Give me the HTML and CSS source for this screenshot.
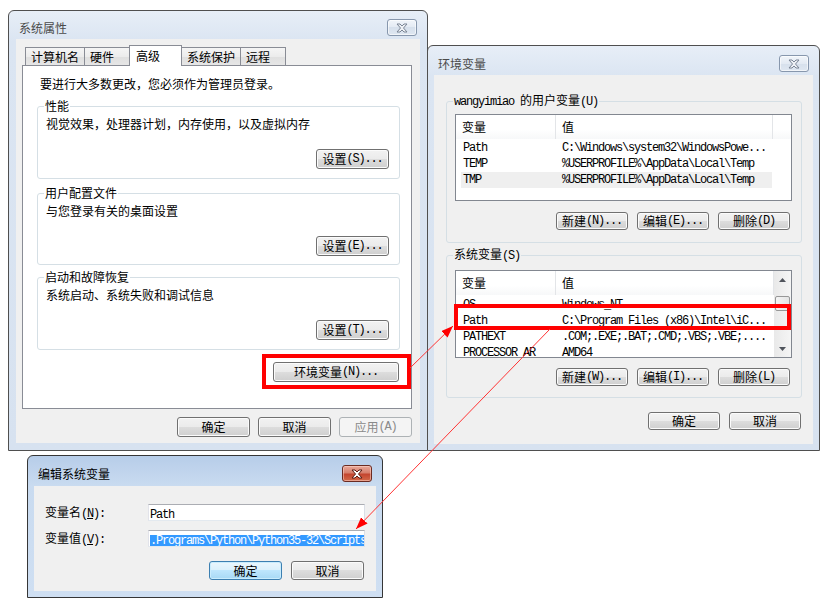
FILE: index.html
```html
<!DOCTYPE html>
<html lang="zh-CN">
<head>
<meta charset="utf-8">
<title>环境变量</title>
<link rel="stylesheet" href="styles.css">
</head>
<body>

<section class="win w1">
  <header class="tb">
    <span class="ttl">系统属性</span>
    <span class="cls"><svg width="12" height="10" viewBox="0 0 12 10"><path d="M1 1h3l2 2 2-2h3l-3.5 4 3.5 4h-3l-2-2-2 2h-3l3.5-4z" class="xg"/></svg></span>
  </header>
  <div class="client c1">
    <div class="tabs">
      <div class="tab">计算机名</div>
      <div class="tab">硬件</div>
      <div class="tab sel">高级</div>
      <div class="tab">系统保护</div>
      <div class="tab">远程</div>
    </div>
    <div class="panel">
      <p class="intro">要进行大多数更改，您必须作为管理员登录。</p>
      <fieldset class="grp g1">
        <legend>性能</legend>
        <p>视觉效果，处理器计划，内存使用，以及虚拟内存</p>
        <div class="brow"><button class="btn">设置<span class="m">(S)...</span></button></div>
      </fieldset>
      <fieldset class="grp g2">
        <legend>用户配置文件</legend>
        <p>与您登录有关的桌面设置</p>
        <div class="brow"><button class="btn">设置<span class="m">(E)...</span></button></div>
      </fieldset>
      <fieldset class="grp g3">
        <legend>启动和故障恢复</legend>
        <p>系统启动、系统失败和调试信息</p>
        <div class="brow"><button class="btn">设置<span class="m">(T)...</span></button></div>
      </fieldset>
      <div class="brow env"><button class="btn wide">环境变量<span class="m">(N)...</span></button></div>
    </div>
    <div class="brow foot1">
      <button class="btn">确定</button>
      <button class="btn">取消</button>
      <button class="btn" disabled>应用<span class="m">(A)</span></button>
    </div>
  </div>
</section>

<section class="win w2">
  <header class="tb">
    <span class="ttl">环境变量</span>
    <span class="cls"><svg width="12" height="10" viewBox="0 0 12 10"><path d="M1 1h3l2 2 2-2h3l-3.5 4 3.5 4h-3l-2-2-2 2h-3l3.5-4z" class="xg"/></svg></span>
  </header>
  <div class="client c2">
    <fieldset class="grp ug">
      <legend><span class="m">wangyimiao </span>的用户变量<span class="m">(U)</span></legend>
      <div class="list ulist">
        <div class="lhead">
          <div class="hc hn">变量</div>
          <div class="hc hv">值</div>
          <div class="hc hr"></div>
        </div>
        <div class="lbody">
          <div class="lrow"><span class="cn m">Path</span><span class="cv m">C:\Windows\system32\WindowsPowe...</span></div>
          <div class="lrow"><span class="cn m">TEMP</span><span class="cv m">%USERPROFILE%\AppData\Local\Temp</span></div>
          <div class="lrow hot"><span class="cn m">TMP</span><span class="cv m">%USERPROFILE%\AppData\Local\Temp</span></div>
        </div>
      </div>
      <div class="brow lbtns">
        <button class="btn s">新建<span class="m">(N)...</span></button>
        <button class="btn s">编辑<span class="m">(E)...</span></button>
        <button class="btn s">删除<span class="m">(D)</span></button>
      </div>
    </fieldset>
    <fieldset class="grp sg">
      <legend>系统变量<span class="m">(S)</span></legend>
      <div class="list slist">
        <div class="lmain">
          <div class="lhead">
            <div class="hc hn">变量</div>
            <div class="hc hv2">值</div>
          </div>
          <div class="lbody">
            <div class="lrow cut"><span class="cn m">OS</span><span class="cv m">Windows_NT</span></div>
            <div class="lrow"><span class="cn m">Path</span><span class="cv m">C:\Program Files (x86)\Intel\iC...</span></div>
            <div class="lrow"><span class="cn m">PATHEXT</span><span class="cv m">.COM;.EXE;.BAT;.CMD;.VBS;.VBE;....</span></div>
            <div class="lrow"><span class="cn m">PROCESSOR_AR</span><span class="cv m">AMD64</span></div>
          </div>
        </div>
        <div class="sbar">
          <div class="sarrow"><svg width="7" height="4" viewBox="0 0 7 4"><path d="M0 4L3.5 0 7 4z" fill="#50545c"/></svg></div>
          <div class="thumb"></div>
          <div class="sfill"></div>
          <div class="sarrow"><svg width="7" height="4" viewBox="0 0 7 4"><path d="M0 0L3.5 4 7 0z" fill="#50545c"/></svg></div>
        </div>
      </div>
      <div class="brow lbtns">
        <button class="btn s">新建<span class="m">(W)...</span></button>
        <button class="btn s">编辑<span class="m">(I)...</span></button>
        <button class="btn s">删除<span class="m">(L)</span></button>
      </div>
    </fieldset>
    <div class="brow foot2">
      <button class="btn s">确定</button>
      <button class="btn s">取消</button>
    </div>
  </div>
</section>

<section class="win w3 active">
  <header class="tb">
    <span class="ttl">编辑系统变量</span>
    <span class="cls red"><svg width="12" height="10" viewBox="0 0 12 10"><path d="M1 1h3l2 2 2-2h3l-3.5 4 3.5 4h-3l-2-2-2 2h-3l3.5-4z" class="xg"/></svg></span>
  </header>
  <div class="client c3">
    <div class="form">
      <label class="lbl">变量名<span class="m">(<u>N</u>):</span></label>
      <div class="inp"><span class="m">Path</span></div>
      <label class="lbl">变量值<span class="m">(<u>V</u>):</span></label>
      <div class="inp"><span class="m selx">.Programs\Python\Python35-32\Scripts</span></div>
    </div>
    <div class="brow foot3">
      <button class="btn def">确定</button>
      <button class="btn">取消</button>
    </div>
  </div>
</section>

<svg class="ann" width="837" height="605" viewBox="0 0 837 605">
  <defs>
    <marker id="ah" markerUnits="userSpaceOnUse" markerWidth="12" markerHeight="9" viewBox="0 0 12 9" refX="12" refY="4.5" orient="auto">
      <path d="M0 0L12 4.5L0 9z" fill="#f00"/>
    </marker>
  </defs>
  <rect x="264" y="356" width="145" height="31" fill="none" stroke="#f00" stroke-width="4"/>
  <rect x="456" y="306" width="333" height="22" fill="none" stroke="#f00" stroke-width="4"/>
  <line x1="410" y1="368" x2="453" y2="326" stroke="#f33" stroke-width="1" marker-end="url(#ah)"/>
  <line x1="550" y1="329" x2="356" y2="529" stroke="#f33" stroke-width="1" marker-end="url(#ah)"/>
</svg>

</body>
</html>
```

FILE: styles.css
```css
* { box-sizing: border-box; }

body {
  margin: 0;
  width: 837px;
  height: 605px;
  position: relative;
  overflow: hidden;
  background: #fff;
  color: #000;
  font: 12px/16px "Noto Sans CJK SC", "Noto Sans", sans-serif;
}

.m {
  font-family: "Liberation Mono", "Noto Sans CJK SC", monospace;
  letter-spacing: -1.2px;
}

p { margin: 0; }

/* ---------- windows ---------- */
.win {
  position: absolute;
  display: flex;
  flex-direction: column;
  border: 1px solid #4f4f4f;
  border-radius: 6px 6px 0 0;
  background: linear-gradient(#e7eef7, #dbe5f2 30px, #d7e2f0);
}
.w1 { left: 8px; top: 10px; width: 420px; height: 441px; }
.w2 { left: 427px; top: 45px; width: 393px; height: 406px; }
.w3 { left: 27px; top: 455px; width: 356px; height: 143px; border-color: #363636;
      background: linear-gradient(#b7cde9, #c9dbf0 30px, #cfdff2); }

.tb {
  flex: none;
  display: flex;
  align-items: flex-start;
  justify-content: space-between;
  padding: 9px 10px 0 10px;
}
.w1 .tb { height: 28px; padding-top: 8px; }
.w2 .tb { height: 29px; }
.w3 .tb { height: 30px; }

.ttl { margin-top: 1px; color: #4a4a4a; }
.w3 .ttl { color: #000; }

.cls {
  width: 30px;
  height: 17px;
  border: 1px solid #8797ad;
  border-radius: 3px;
  background: linear-gradient(#f1f5fa, #e3eaf3 50%, #d6e0ec 50%, #dfe7f1);
  display: flex;
  align-items: center;
  justify-content: center;
  box-shadow: inset 0 0 0 1px rgba(255,255,255,0.6);
}
.xg { fill: #eef1f5; stroke: #7a8595; stroke-width: 1; stroke-linejoin: round; }
.cls.red {
  border-color: #6b2b22;
  background: linear-gradient(#e9a89a, #d7806d 45%, #c4452f 55%, #d36a4a);
  box-shadow: inset 0 0 0 1px rgba(255,220,210,0.5);
}
.cls.red .xg { fill: #fff; stroke: #5a1d14; }

.client {
  flex: 1;
  background: #f0f0f0;
  display: flex;
  flex-direction: column;
}
.c1 { margin: 0 7px 7px 7px; padding: 7px 8px 0 6px; }
.c2 { margin: 0 6px 6px 6px; padding: 17px 11px 0 12px; }
.c3 { margin: 0 6px 6px 6px; padding: 18px 11px 0 11px; }

/* ---------- buttons ---------- */
.btn {
  flex: none;
  width: 73px;
  height: 20px;
  padding: 0;
  margin: 0;
  font: inherit;
  line-height: 18px;
  color: #000;
  border: 1px solid #707070;
  border-radius: 3px;
  background: linear-gradient(#f2f2f2, #ebebeb 50%, #dddddd 50%, #cfcfcf);
  box-shadow: inset 0 0 0 1px #fbfbfb;
  display: flex;
  align-items: center;
  justify-content: center;
}
.btn.s { width: 72px; height: 18px; line-height: 16px; }
.btn.wide { width: 126px; }
.btn:disabled {
  color: #8a8a8a;
  border-color: #adb2b5;
  background: #f4f4f4;
  box-shadow: none;
}
.btn.def {
  border-color: #3c7fb1;
  background: linear-gradient(#eaf6fd, #d9f0fc 50%, #bee6fd 50%, #a7d9f5);
  box-shadow: inset 0 0 0 1px #c9ecfd;
}

.brow { display: flex; justify-content: flex-end; gap: 9px; }

/* ---------- tabs ---------- */
.tabs {
  display: flex;
  align-items: flex-end;
  height: 20px;
  padding-left: 3px;
  margin-bottom: -1px;
  position: relative;
  z-index: 1;
}
.tab {
  min-width: 46px;
  height: 19px;
  line-height: 17px;
  padding: 0 5px;
  margin-left: -1px;
  border: 1px solid #898c95;
  background: linear-gradient(#f5f5f5, #ececec 50%, #dfdfdf 50%, #e6e6e6);
}
.tab:first-child { margin-left: 0; }
.tab.sel {
  min-width: 53px;
  height: 21px;
  line-height: 20px;
  padding-left: 6px;
  border-bottom: none;
  background: #fff;
  position: relative;
  z-index: 2;
}

.panel {
  height: 344px;
  background: #fff;
  border: 1px solid #898c95;
  padding: 10px 11px 0 14px;
  display: flex;
  flex-direction: column;
}
.intro { padding-left: 3px; }

/* ---------- group boxes ---------- */
.grp {
  margin: 6px 0 0;
  min-width: 0;
  border: 1px solid #d5dfe5;
  border-radius: 3px;
  padding: 2px 10px 9px 8px;
}
.grp legend { padding: 0 1px; margin-left: -2px; line-height: 16px; }
.g2 { padding-bottom: 8px; }
.g3 { margin-top: 4px; }
.grp .brow { margin-top: 17px; }
.env { margin-top: 12px; padding-right: 1px; }
.foot1 { margin-top: 8px; gap: 8px; }

/* window 2 groups */
.ug { margin: 0; padding: 4px 9px 12px 8px; }
.sg { margin-top: 3px; padding: 6px 9px 11px 8px; }
.ug .lbtns { margin-top: 11px; padding-right: 2px; }
.sg .lbtns { margin-top: 10px; padding-right: 2px; }
.foot2 { margin-top: 14px; padding-right: 1px; }

/* ---------- list views ---------- */
.list {
  background: #fff;
  border: 1px solid #828790;
}
.ulist { height: 87px; }
.slist { height: 88px; display: flex; }
.lmain { flex: 1; overflow: hidden; display: flex; flex-direction: column; }

.lhead { display: flex; height: 24px; flex: none;
  background: linear-gradient(#fff 60%, #f7f8f9); }
.hc { height: 24px; line-height: 23px; padding-left: 6px; border-right: 1px solid #e3e5e8; }
.hn { width: 100px; }
.hv { width: 217px; }
.hr { flex: 1; border-right: none; }
.hv2 { flex: 1; }

.lbody { padding-top: 1px; }
.slist .lbody { padding-top: 2px; }
.lrow {
  display: flex;
  height: 16px;
  line-height: 16px;
  margin-left: 5px;
  width: 311px;
  white-space: nowrap;
}
.lrow.hot { background: #efefef; }
.lrow.cut { overflow: hidden; align-items: flex-start; }
.lrow.cut > span { margin-top: -3px; line-height: 22px; }
.cn { width: 95px; padding-left: 2px; overflow: hidden; }
.cv { padding-left: 6px; }

.sbar {
  width: 17px;
  flex: none;
  display: flex;
  flex-direction: column;
  align-items: center;
  background: linear-gradient(90deg, #e9e9e9, #f5f5f5);
}
.sarrow { height: 17px; width: 17px; display: flex; align-items: center; justify-content: center; }
.thumb {
  width: 15px;
  height: 15px;
  margin-top: 8px;
  border: 1px solid #979797;
  border-radius: 2px;
  background: linear-gradient(90deg, #f5f5f5, #e4e4e4);
}
.sfill { flex: 1; }

/* ---------- edit dialog ---------- */
.form {
  display: grid;
  grid-template-columns: 103px 217px;
  grid-auto-rows: 17px;
  row-gap: 9px;
  align-items: center;
}
.lbl { line-height: 16px; }
.inp {
  height: 17px;
  background: #fff;
  border: 1px solid;
  border-color: #abadb3 #dbdfe6 #e3e9ef #e2e3ea;
  padding: 0 0 0 1px;
  line-height: 15px;
  white-space: nowrap;
  overflow: hidden;
}
.selx { background: #3399ff; color: #fff; display: inline-block; line-height: 13px; margin-top: 1px; }
.foot3 { margin-top: 14px; gap: 9px; padding-right: 1px; }
.foot3 .btn { height: 19px; line-height: 17px; }

/* ---------- annotations ---------- */
.ann { position: absolute; left: 0; top: 0; pointer-events: none; }
```
